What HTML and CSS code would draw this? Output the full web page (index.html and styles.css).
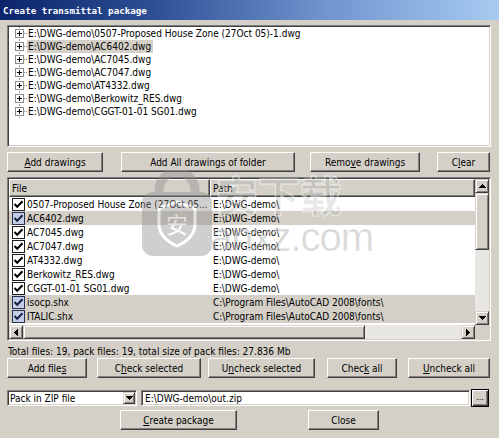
FILE: index.html
```html
<!DOCTYPE html>
<html lang="en">
<head>
<meta charset="utf-8">
<title>Create transmittal package</title>
<link rel="stylesheet" href="styles.css">
</head>
<body>
<svg class="defs" width="0" height="0" aria-hidden="true">
  <symbol id="exp" viewBox="0 0 12 13">
    <path d="M4.5 0v1M4.5 12v1" stroke="#a0a0a0"/>
    <rect x="0.5" y="2.5" width="8" height="8" fill="#fff" stroke="#8c8c8c"/>
    <path d="M2 6.5h5M4.5 4v5" stroke="#000"/>
    <path d="M9 6.5h1M11 6.5h1" stroke="#8c8c8c"/>
  </symbol>
  <symbol id="chk" viewBox="0 0 13 13">
    <rect x="0.5" y="0.5" width="12" height="12" fill="#fff" stroke="#1e1e1e"/>
    <path d="M2.5 6 L5.2 8.7 L10.5 3.2" fill="none" stroke="#000" stroke-width="2"/>
  </symbol>
  <symbol id="chks" viewBox="0 0 13 13">
    <rect x="0.5" y="0.5" width="12" height="12" fill="#c3cde6" stroke="#27314f"/>
    <path d="M2.5 6 L5.2 8.7 L10.5 3.2" fill="none" stroke="#18224a" stroke-width="2"/>
  </symbol>
  <symbol id="tup" viewBox="0 0 7 4"><path d="M3 0h1v1h1v1h1v1h1v1H0V3h1V2h1V1h1z" fill="#000"/></symbol>
  <symbol id="tdn" viewBox="0 0 7 4"><path d="M0 0h7v1H6v1H5v1H4v1H3V3H2V2H1V1H0z" fill="#000"/></symbol>
  <symbol id="tlf" viewBox="0 0 4 7"><path d="M3 0h1v7H3V6H2V5H1V4H0V3h1V2h1V1h1z" fill="#000"/></symbol>
  <symbol id="trt" viewBox="0 0 4 7"><path d="M0 0h1v1h1v1h1v1h1v1H3v1H2v1H1v1H0z" fill="#000"/></symbol>
</svg>

<div class="window">
  <div class="titlebar"><span class="title">Create transmittal package</span></div>

  <div class="tree">
    <div class="titem"><svg class="exp"><use href="#exp"/></svg><span class="tlabel">E:\DWG-demo\0507-Proposed House Zone (27Oct 05)-1.dwg</span></div>
    <div class="titem"><svg class="exp"><use href="#exp"/></svg><span class="tlabel tsel">E:\DWG-demo\AC6402.dwg</span></div>
    <div class="titem"><svg class="exp"><use href="#exp"/></svg><span class="tlabel">E:\DWG-demo\AC7045.dwg</span></div>
    <div class="titem"><svg class="exp"><use href="#exp"/></svg><span class="tlabel">E:\DWG-demo\AC7047.dwg</span></div>
    <div class="titem"><svg class="exp"><use href="#exp"/></svg><span class="tlabel">E:\DWG-demo\AT4332.dwg</span></div>
    <div class="titem"><svg class="exp"><use href="#exp"/></svg><span class="tlabel">E:\DWG-demo\Berkowitz_RES.dwg</span></div>
    <div class="titem"><svg class="exp"><use href="#exp"/></svg><span class="tlabel">E:\DWG-demo\CGGT-01-01 SG01.dwg</span></div>
  </div>

  <div class="btnrow row1">
    <div class="btn b-adddr"><span><u>A</u>dd drawings</span></div>
    <div class="btn b-addall"><span>Add All drawings of folder</span></div>
    <div class="btn b-remove"><span>Remo<u>v</u>e drawings</span></div>
    <div class="btn b-clear"><span>C<u>l</u>ear</span></div>
  </div>

  <div class="list">
    <div class="lview">
      <div class="lhead">
        <div class="hcell h-file">File</div>
        <div class="hcell h-path">Path</div>
      </div>
      <div class="lrow"><div class="c-file"><svg class="cb"><use href="#chk"/></svg><span class="fname">0507-Proposed House Zone (27Oct 05...</span></div><div class="c-path">E:\DWG-demo\</div></div>
      <div class="lrow sel"><div class="c-file"><svg class="cb"><use href="#chks"/></svg><span class="fname">AC6402.dwg</span></div><div class="c-path">E:\DWG-demo\</div></div>
      <div class="lrow"><div class="c-file"><svg class="cb"><use href="#chk"/></svg><span class="fname">AC7045.dwg</span></div><div class="c-path">E:\DWG-demo\</div></div>
      <div class="lrow"><div class="c-file"><svg class="cb"><use href="#chk"/></svg><span class="fname">AC7047.dwg</span></div><div class="c-path">E:\DWG-demo\</div></div>
      <div class="lrow"><div class="c-file"><svg class="cb"><use href="#chk"/></svg><span class="fname">AT4332.dwg</span></div><div class="c-path">E:\DWG-demo\</div></div>
      <div class="lrow"><div class="c-file"><svg class="cb"><use href="#chk"/></svg><span class="fname">Berkowitz_RES.dwg</span></div><div class="c-path">E:\DWG-demo\</div></div>
      <div class="lrow"><div class="c-file"><svg class="cb"><use href="#chk"/></svg><span class="fname">CGGT-01-01 SG01.dwg</span></div><div class="c-path">E:\DWG-demo\</div></div>
      <div class="lrow sel"><div class="c-file"><svg class="cb"><use href="#chks"/></svg><span class="fname">isocp.shx</span></div><div class="c-path">C:\Program Files\AutoCAD 2008\fonts\</div></div>
      <div class="lrow sel"><div class="c-file"><svg class="cb"><use href="#chks"/></svg><span class="fname">ITALIC.shx</span></div><div class="c-path">C:\Program Files\AutoCAD 2008\fonts\</div></div>
    </div>
    <div class="vscroll">
      <div class="sbtn"><svg class="tv"><use href="#tup"/></svg></div>
      <div class="sthumb v-thumb"></div>
      <div class="strack"></div>
      <div class="sbtn"><svg class="tv"><use href="#tdn"/></svg></div>
    </div>
    <div class="hscroll">
      <div class="sbtn"><svg class="th"><use href="#tlf"/></svg></div>
      <div class="sthumb h-thumb"></div>
      <div class="strack"></div>
      <div class="sbtn"><svg class="th"><use href="#trt"/></svg></div>
    </div>
    <div class="corner"></div>
  </div>

  <div class="status">Total files: 19, pack files: 19, total size of pack files: 27.836 Mb</div>

  <div class="btnrow row2">
    <div class="btn b-addfiles"><span>Add file<u>s</u></span></div>
    <div class="btn b-checksel"><span>C<u>h</u>eck selected</span></div>
    <div class="btn b-unchecksel"><span>U<u>n</u>check selected</span></div>
    <div class="btn b-checkall"><span>Chec<u>k</u> all</span></div>
    <div class="btn b-uncheckall"><span><u>U</u>ncheck all</span></div>
  </div>

  <div class="outrow">
    <div class="combo">
      <span class="combo-text">Pack in ZIP file</span>
      <div class="combo-btn"><svg class="tv"><use href="#tdn"/></svg></div>
    </div>
    <div class="edit">E:\DWG-demo\out.zip</div>
    <div class="browse">...</div>
  </div>

  <div class="btnrow row3">
    <div class="btn b-create"><span><u>C</u>reate package</span></div>
    <div class="btn b-close"><span>Close</span></div>
  </div>

  <div class="watermark" aria-hidden="true">
    <svg class="wm-logo" width="74" height="88" viewBox="0 0 74 88">
      <path d="M19 30 V20 a18 18 0 0 1 36 0 V30" fill="none" stroke="#8a8a8a" stroke-width="9"/>
      <rect x="2" y="22" width="70" height="64" rx="11" fill="#8a8a8a"/>
      <path d="M37 32 L55 38 V54 Q55 68 37 76 Q19 68 19 54 V38 Z" fill="none" stroke="#fff" stroke-width="3"/>
      <text x="37" y="63" font-size="22" text-anchor="middle" fill="#fff" font-family="Noto Sans CJK SC, sans-serif">安</text>
    </svg>
    <span class="wm-cn">安下载</span>
    <span class="wm-en">anxz.com</span>
  </div>
</div>
</body>
</html>
```

FILE: styles.css
```css
* { box-sizing: border-box; }
html, body { margin: 0; padding: 0; }
body {
  width: 499px;
  height: 438px;
  overflow: hidden;
  background: #d4d0c8;
  font-family: "DejaVu Sans Condensed", "DejaVu Sans", sans-serif;
  font-stretch: condensed;
  font-size: 10px;
  color: #000;
}
.defs { position: absolute; width: 0; height: 0; overflow: hidden; }

.window {
  position: relative;
  width: 499px;
  height: 438px;
  background: #d4d0c8;
}

/* title bar */
.titlebar {
  height: 20px;
  display: flex;
  align-items: center;
  padding-left: 3px;
  background: linear-gradient(to right, #0a246a 0%, #2c4f93 30%, #6f94cf 65%, #a6caf0 100%);
}
.title {
  font-family: "DejaVu Sans Mono", "Liberation Mono", monospace;
  font-stretch: normal;
  font-weight: bold;
  font-size: 9.2px;
  color: #fff;
}

/* tree */
.tree {
  margin: 5px 8px 0 7px;
  height: 122px;
  background: #fff;
  border: 1px solid;
  border-color: #808080 #fff #fff #808080;
  box-shadow: inset 1px 1px #404040, inset -1px -1px #d4d0c8;
  padding: 1px 2px 2px 7px;
}
.titem {
  display: flex;
  align-items: center;
  height: 13px;
}
.exp { width: 12px; height: 13px; flex: none; }
.tlabel {
  line-height: 13px;
  padding: 0 2px 0 1px;
  white-space: nowrap;
}
.tsel { background: #d4d0c8; }

/* buttons */
.btnrow { display: flex; height: 20px; }
.row1 { margin-top: 5px; }
.btn {
  height: 20px;
  display: flex;
  align-items: center;
  justify-content: center;
  background: #d4d0c8;
  border: 1px solid;
  border-color: #fff #404040 #404040 #fff;
  box-shadow: inset -1px -1px #808080;
  white-space: nowrap;
  flex: none;
}
.btn u { text-decoration: underline; text-underline-offset: 1px; }
.b-adddr { margin-left: 7px; width: 96px; }
.b-addall { margin-left: 18px; width: 174px; }
.b-remove { margin-left: 15px; width: 110px; }
.b-clear { margin-left: 17px; width: 53px; }

/* list view */
.list {
  margin: 5px 8px 0 7px;
  height: 164px;
  border: 1px solid;
  border-color: #808080 #fff #fff #808080;
  box-shadow: inset 1px 1px #404040, inset -1px -1px #d4d0c8;
  padding: 1px;
  display: grid;
  grid-template-columns: 466px 14px;
  grid-template-rows: 146px 14px;
}
.lview {
  background: #fff;
  overflow: hidden;
}
.lhead { display: flex; height: 18px; }
.hcell {
  height: 18px;
  display: flex;
  align-items: center;
  padding-left: 2px;
  background: #d4d0c8;
  border: 1px solid;
  border-color: #fff #404040 #404040 #fff;
  box-shadow: inset -1px -1px #808080;
}
.h-file { width: 201px; }
.h-path { flex: 1; }
.lrow {
  display: flex;
  align-items: center;
  height: 14px;
  white-space: nowrap;
}
.lrow.sel { background: #d4d0c8; }
.c-file {
  width: 201px;
  display: flex;
  align-items: center;
  overflow: hidden;
  flex: none;
}
.cb { width: 13px; height: 13px; margin-left: 3px; flex: none; }
.fname { margin-left: 2px; }
.c-path { padding-left: 3px; }

/* scrollbars */
.vscroll { display: flex; flex-direction: column; }
.hscroll { display: flex; }
.sbtn {
  width: 14px;
  height: 14px;
  flex: none;
  display: flex;
  align-items: center;
  justify-content: center;
  background: #d4d0c8;
  border: 1px solid;
  border-color: #d4d0c8 #404040 #404040 #d4d0c8;
  box-shadow: inset 1px 1px #fff, inset -1px -1px #808080;
}
.sthumb {
  background: #d4d0c8;
  border: 1px solid;
  border-color: #d4d0c8 #404040 #404040 #d4d0c8;
  box-shadow: inset 1px 1px #fff, inset -1px -1px #808080;
  flex: none;
}
.v-thumb { height: 57px; }
.h-thumb { width: 342px; }
.strack { flex: 1; background: #e9e7e3; }
.tv { width: 7px; height: 4px; }
.th { width: 4px; height: 7px; }
.corner { background: #d4d0c8; }

/* status */
.status {
  margin: 5px 0 0 8px;
  height: 12px;
  line-height: 12px;
  white-space: nowrap;
}

.b-addfiles { margin-left: 7px; width: 80px; }
.b-checksel { margin-left: 10px; width: 104px; }
.b-unchecksel { margin-left: 7px; width: 107px; }
.b-checkall { margin-left: 12px; width: 70px; }
.b-uncheckall { margin-left: 11px; width: 82px; }

/* output row */
.outrow {
  display: flex;
  align-items: center;
  height: 18px;
  margin-top: 11px;
  padding-left: 7px;
}
.combo {
  width: 130px;
  height: 16px;
  display: flex;
  align-items: center;
  background: #fff;
  border: 1px solid;
  border-color: #808080 #fff #fff #808080;
  box-shadow: inset 1px 1px #404040, inset -1px -1px #d4d0c8;
  padding: 1px;
}
.combo-text { flex: 1; padding-left: 1px; white-space: nowrap; }
.combo-btn {
  width: 12px;
  height: 12px;
  display: flex;
  align-items: center;
  justify-content: center;
  background: #d4d0c8;
  border: 1px solid;
  border-color: #d4d0c8 #404040 #404040 #d4d0c8;
  box-shadow: inset 1px 1px #fff, inset -1px -1px #808080;
}
.edit {
  margin-left: 4px;
  width: 329px;
  height: 16px;
  display: flex;
  align-items: center;
  padding-left: 3px;
  background: #fff;
  border: 1px solid;
  border-color: #808080 #fff #fff #808080;
  box-shadow: inset 1px 1px #404040, inset -1px -1px #d4d0c8;
  white-space: nowrap;
}
.browse {
  margin-left: 1px;
  width: 18px;
  height: 18px;
  display: flex;
  align-items: center;
  justify-content: center;
  background: #d4d0c8;
  border: 1px solid #000;
  box-shadow: inset 1px 1px #fff, inset -1px -1px #404040, inset -2px -2px #808080;
  font-size: 9px;
  line-height: 1;
  padding-bottom: 2px;
}

.row3 { margin-top: 3px; }
.b-create { margin-left: 120px; width: 117px; }
.b-close { margin-left: 71px; width: 71px; }

/* watermark overlay */
.watermark {
  position: absolute;
  left: 140px;
  top: 170px;
  width: 220px;
  height: 95px;
  pointer-events: none;
}
.wm-logo {
  position: absolute;
  left: 0;
  top: 0;
  opacity: 0.4;
}
.wm-cn {
  position: absolute;
  left: 76px;
  top: 0;
  font-family: "Noto Sans CJK SC", sans-serif;
  font-stretch: normal;
  font-size: 42px;
  line-height: 48px;
  font-weight: bold;
  color: rgba(150, 150, 150, 0.22);
  -webkit-text-stroke: 1px rgba(255, 255, 255, 0.6);
}
.wm-en {
  position: absolute;
  left: 70px;
  top: 44px;
  font-family: "Liberation Sans", sans-serif;
  font-stretch: normal;
  font-size: 40px;
  line-height: 46px;
  letter-spacing: -1px;
  color: rgba(140, 140, 140, 0.35);
  -webkit-text-stroke: 1px rgba(255, 255, 255, 0.5);
}
```
